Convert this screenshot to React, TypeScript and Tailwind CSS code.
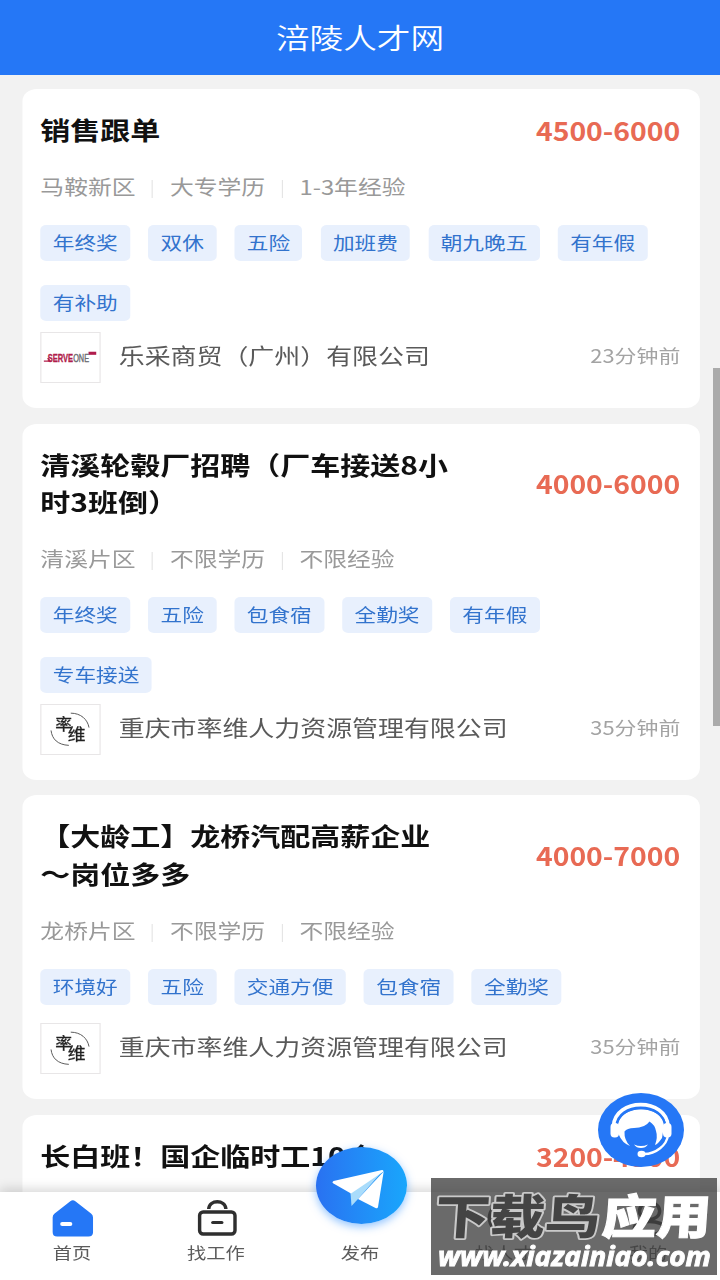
import React from 'react';

type Job = {
  title: string[];
  salary: string;
  meta?: string[];
  tags?: string[];
  company?: string;
  logo?: 'serveone' | 'shuaiwei';
  time?: string;
  twoRows?: boolean;
};

const jobs: Job[] = [
  {
    title: ['销售跟单'],
    salary: '4500-6000',
    meta: ['马鞍新区', '大专学历', '1-3年经验'],
    tags: ['年终奖', '双休', '五险', '加班费', '朝九晚五', '有年假', '有补助'],
    company: '乐采商贸（广州）有限公司',
    logo: 'serveone',
    time: '23分钟前',
    twoRows: true,
  },
  {
    title: ['清溪轮毂厂招聘（厂车接送8小', '时3班倒）'],
    salary: '4000-6000',
    meta: ['清溪片区', '不限学历', '不限经验'],
    tags: ['年终奖', '五险', '包食宿', '全勤奖', '有年假', '专车接送'],
    company: '重庆市率维人力资源管理有限公司',
    logo: 'shuaiwei',
    time: '35分钟前',
    twoRows: true,
  },
  {
    title: ['【大龄工】龙桥汽配高薪企业', '～岗位多多'],
    salary: '4000-7000',
    meta: ['龙桥片区', '不限学历', '不限经验'],
    tags: ['环境好', '五险', '交通方便', '包食宿', '全勤奖'],
    company: '重庆市率维人力资源管理有限公司',
    logo: 'shuaiwei',
    time: '35分钟前',
  },
  { title: ['长白班！国企临时工10个'], salary: '3200-4500' },
];

function ServeOneLogo() {
  return (
    <svg viewBox="0 0 60 51" preserveAspectRatio="none" className="h-full w-full">
      <path d="M2.500 29.300h6.500L6.500 26" stroke="#b01c4c" strokeWidth="1.500" fill="none" />
      <rect x="49" y="19.500" width="8" height="3.200" fill="#b01c4c" />
      <text x="6.500" y="30" fontSize="10.500" fontWeight="700" fill="#b01c4c" stroke="#b01c4c" strokeWidth=".3" textLength="26.500" lengthAdjust="spacingAndGlyphs" fontFamily="Liberation Sans, sans-serif">SERVE</text>
      <text x="33" y="30" fontSize="10.500" fill="#6b6b70" stroke="#6b6b70" strokeWidth=".4" textLength="16.500" lengthAdjust="spacingAndGlyphs" fontFamily="Liberation Sans, sans-serif">ONE</text>
    </svg>
  );
}

function ShuaiweiLogo() {
  return (
    <svg viewBox="0 0 60 51" preserveAspectRatio="none" className="h-full w-full">
      <path d="M30.500 8.500C41 8.500 48 15 49.500 23.500M10 26.500C11 35.500 17 41.500 28.500 42" stroke="#555" strokeWidth="1" fill="none" />
      <text x="14.500" y="26.300" fontSize="17" fontWeight="400" fill="#222" stroke="#222" strokeWidth=".3" textLength="17.500" lengthAdjust="spacingAndGlyphs" fontFamily="Noto Sans CJK SC, sans-serif">率</text>
      <text x="27.500" y="36.500" fontSize="17" fontWeight="400" fill="#222" stroke="#222" strokeWidth=".3" textLength="18.500" lengthAdjust="spacingAndGlyphs" fontFamily="Noto Sans CJK SC, sans-serif">维</text>
    </svg>
  );
}

function JobCard({ job }: { job: Job }) {
  return (
    <article className="min-h-[180px] rounded-[12px] bg-white pt-[22px] pr-[16.500px] pb-[25px] pl-[15.500px]">
      <div className="flex items-center justify-between">
        <h2 className="text-[25.330px] leading-[37.300px] font-bold whitespace-nowrap text-[#111]">
          {job.title.map((line) => (
            <span key={line} className="block">{line}</span>
          ))}
        </h2>
        <span className="origin-right scale-x-[0.92] text-[26px] leading-[37.300px] font-bold text-[#e86a54]">{job.salary}</span>
      </div>
      {job.meta && (
        <div className="mt-[24.800px] flex h-[28px] items-center text-[20.100px] leading-[28px] text-[#999]">
          {job.meta.map((m, i) => (
            <React.Fragment key={m}>
              {i > 0 && <i className="mx-[14px] mt-1 h-[18px] w-px bg-[#e5e5e5]" />}
              <span>{m}</span>
            </React.Fragment>
          ))}
        </div>
      )}
      {job.tags && (
        <div className="mt-[23.800px] flex flex-wrap gap-x-[15.200px] gap-y-6 pr-6">
          {job.tags.map((t) => (
            <span key={t} className="h-9 rounded-[5px] bg-[#e8f0fd] px-[10.500px] text-[18.300px] leading-[34px] whitespace-nowrap text-[#3273cd]">{t}</span>
          ))}
        </div>
      )}
      {job.company && (
        <div className={`flex items-center ${job.twoRows ? 'mt-[10.700px]' : 'mt-[18.200px]'}`}>
          <div className="h-[51px] w-[50.700px] border border-[#e8e6e7] bg-white">
            {job.logo === 'serveone' ? <ServeOneLogo /> : <ShuaiweiLogo />}
          </div>
          <span className="ml-[15.500px] pb-[5px] text-[21.900px] leading-[30px] text-[#5a5a5a]">{job.company}</span>
          <span className="ml-auto pb-[3px] text-[18.500px] text-[#a3a3a3]">{job.time}</span>
        </div>
      )}
    </article>
  );
}

function NavItem({ label, children }: { label: string; children?: React.ReactNode }) {
  return (
    <div className="flex flex-1 flex-col items-center pt-[5.500px]">
      <div className="flex h-[42px] items-center justify-center pl-[2px]">{children}</div>
      <span className="text-[16.300px] leading-[26px] text-[#5c5c5c]">{label}</span>
    </div>
  );
}

function BottomNav() {
  return (
    <nav className="absolute inset-x-0 bottom-0 flex h-[88.500px] bg-white shadow-[0_-3px_10px_rgba(0,0,0,0.16)]">
      <NavItem label="首页">
        <svg viewBox="0 0 41 37" preserveAspectRatio="none" className="h-[37px] w-[35px]">
          <path d="M18 1.200Q20.500-.6 23 1.200L38.500 13.500Q40.500 15 40.500 17.500V32Q40.500 36.500 36 36.500H5Q.5 36.500.5 32V17.500Q.5 15 2.500 13.500Z" fill="#2577f6" />
          <rect x="8" y="22" width="12" height="4" rx="2" fill="#fff" />
        </svg>
      </NavItem>
      <NavItem label="找工作">
        <svg viewBox="0 0 41 37" preserveAspectRatio="none" className="h-[37px] w-[35px]" fill="none" stroke="#2f2f2f">
          <rect x="3" y="12" width="35" height="22" rx="3.500" strokeWidth="3.400" />
          <path d="M12 9C12.500-.6 28.500-.6 29 9" strokeWidth="3.400" />
          <path d="M16 22.500h9" strokeWidth="3.200" strokeLinecap="round" />
        </svg>
      </NavItem>
      <NavItem label="发布" />
      <NavItem label="找人才">
        <svg viewBox="0 0 41 37" preserveAspectRatio="none" className="h-[37px] w-[35px]" fill="none" stroke="#2f2f2f" strokeWidth="3.400">
          <circle cx="20" cy="18" r="15" />
          <path d="M14 22a7 7 0 0 0 12 0M25 28l6 5" />
        </svg>
      </NavItem>
      <NavItem label="我的">
        <svg viewBox="0 0 41 37" preserveAspectRatio="none" className="h-[37px] w-[35px]" fill="none" stroke="#2f2f2f" strokeWidth="3.400">
          <ellipse cx="20.500" cy="11" rx="10" ry="8.500" />
          <ellipse cx="20.500" cy="28" rx="15" ry="6.500" />
        </svg>
      </NavItem>
    </nav>
  );
}

function PublishButton() {
  return (
    <div className="absolute top-[1147px] left-[316px] h-[77px] w-[91px] rounded-[50%] bg-linear-to-r from-[#2971f1] to-[#19a6fc] shadow-[0_3px_8px_rgba(40,140,255,0.5)]">
      <svg viewBox="0 0 91 77" className="h-full w-full">
        <path d="M34.500 46 67 23.500 42 52 35.500 59Z" fill="#a9dcfb" />
        <path d="M67.700 24.500 62 60Q61.500 62 59.500 61L42 52Z" fill="#fff" />
        <path d="M17.500 34Q15.500 35.500 17.500 36.500L35 46.500 67.500 24.500Q67.500 22.800 66 23Z" fill="#fff" />
      </svg>
    </div>
  );
}

function SupportButton() {
  return (
    <div className="absolute top-[1093px] left-[598px] h-[74px] w-[86px] rounded-[50%] bg-[#2577f6]">
      <svg viewBox="0 0 86 74" className="h-full w-full">
        <path d="M15.500 33C17 4.500 68.500 4.500 70 33" fill="none" stroke="#fff" strokeWidth="3.600" />
        <path d="M20 33C21 10.500 65 10.500 66 33L64 45Q60 51 57 52Q60 44 58 38Q57 32 51.500 28.500Q47 35 36 35Q29 35 26.500 38.500Q26 47 32 53Q24 50 20.500 41Z" fill="#fff" />
        <path d="M18.500 34C20 9 66 9 67.500 34" fill="none" stroke="#2577f6" strokeWidth="1.800" />
        <rect x="12.500" y="30" width="8.500" height="14.500" rx="4" fill="#fff" />
        <rect x="65" y="30" width="8.500" height="14.500" rx="4" fill="#fff" />
        <path d="M70 42C69 52 58 61 46 61" fill="none" stroke="#fff" strokeWidth="2.400" />
        <ellipse cx="43.500" cy="61" rx="4" ry="3.200" fill="#fff" />
        <path d="M36 51.500Q43 54.500 50 51.500Q47.500 55 43 55Q38.500 55 36 51.500Z" fill="#fff" />
      </svg>
    </div>
  );
}

function Watermark() {
  return (
    <div className="absolute top-[1178px] left-[431px] h-[97px] w-[286px] bg-[rgba(64,64,64,0.78)]">
      <svg viewBox="0 0 286 97" className="h-full w-full" fontFamily="Noto Sans CJK SC, sans-serif" fontWeight="900">
        <g transform="translate(7 0) skewX(-4)">
          <text x="0" y="56" fontSize="47" textLength="165" lengthAdjust="spacingAndGlyphs" fill="#444" stroke="#c9c9c9" strokeWidth="3.500" paintOrder="stroke" strokeLinejoin="round">下载鸟</text>
          <text x="167" y="56" fontSize="47" textLength="109" lengthAdjust="spacingAndGlyphs" fill="#fff" stroke="#fff" strokeWidth="1">应用</text>
        </g>
        <text x="7" y="88" fontSize="27" fontStyle="italic" fontWeight="700" textLength="273" lengthAdjust="spacingAndGlyphs" fill="#fff" stroke="#fff" strokeWidth=".9" fontFamily="Noto Sans, Open Sans, sans-serif">www.xiazainiao.com</text>
      </svg>
    </div>
  );
}

export default function App() {
  return (
    <div className="relative h-[1280px] w-[720px] overflow-hidden bg-[#f2f2f2] font-['Noto_Sans_CJK_SC',sans-serif]">
      {/* The page is laid out 608px wide and widened to fill the 720px screen. */}
      <div className="relative h-[1280px] w-[608px] origin-top-left scale-x-[1.18421] overflow-hidden">
        <header className="flex h-[75px] items-center justify-center bg-[#2577f6] text-[28.400px] font-[350] text-white">涪陵人才网</header>
        <main className="flex flex-col gap-[15.800px] pt-[14.300px] pr-[17px] pl-[18.600px]">
          {jobs.map((job) => (
            <JobCard key={job.salary} job={job} />
          ))}
        </main>
        <BottomNav />
      </div>
      <div className="absolute top-[368px] right-0 h-[358px] w-[7px] bg-[#ababab]" />
      <PublishButton />
      <SupportButton />
      <Watermark />
    </div>
  );
}
